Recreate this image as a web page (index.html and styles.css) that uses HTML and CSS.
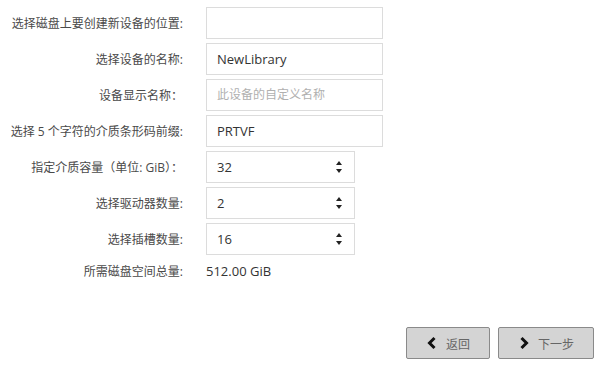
FILE: index.html
```html
<!doctype html>
<html lang="zh">
<head>
  <meta charset="UTF-8">
  <title>新建设备</title>
  <link rel="stylesheet" href="styles.css">
</head>
<body>
<div class="form">
  <div class="row">
    <label>选择磁盘上要创建新设备的位置:</label>
    <div class="field"></div>
  </div>
  <div class="row">
    <label>选择设备的名称:</label>
    <div class="field">NewLibrary</div>
  </div>
  <div class="row">
    <label>设备显示名称：</label>
    <div class="field placeholder">此设备的自定义名称</div>
  </div>
  <div class="row">
    <label>选择 5 个字符的介质条形码前缀:</label>
    <div class="field">PRTVF</div>
  </div>
  <div class="row">
    <label>指定介质容量（单位: GiB）：</label>
    <div class="field num"><span>32</span><i class="spin"><b class="up"></b><b class="down"></b></i></div>
  </div>
  <div class="row">
    <label>选择驱动器数量:</label>
    <div class="field num"><span>2</span><i class="spin"><b class="up"></b><b class="down"></b></i></div>
  </div>
  <div class="row">
    <label>选择插槽数量:</label>
    <div class="field num"><span>16</span><i class="spin"><b class="up"></b><b class="down"></b></i></div>
  </div>
  <div class="row total">
    <label>所需磁盘空间总量:</label>
    <div class="value">512.00 GiB</div>
  </div>
</div>
<div class="actions">
  <button class="btn">
    <svg width="12" height="14" viewBox="0 0 12 14"><path d="M8.5 2 L3.5 7 L8.5 12" fill="none" stroke="#111" stroke-width="3"/></svg>
    返回
  </button>
  <button class="btn">
    <svg width="12" height="14" viewBox="0 0 12 14"><path d="M3.5 2 L8.5 7 L3.5 12" fill="none" stroke="#111" stroke-width="3"/></svg>
    下一步
  </button>
</div>
</body>
</html>
```

FILE: styles.css
```css
* {
  margin: 0;
  padding: 0;
  box-sizing: border-box;
}

body {
  width: 604px;
  height: 370px;
  background: #fff;
  font-family: "Open Sans", "Noto Sans CJK SC", sans-serif;
  color: #333;
  overflow: hidden;
}

.form {
  padding: 7px 0 0 8px;
  display: flex;
  flex-direction: column;
  gap: 4px;
}

.row {
  display: grid;
  grid-template-columns: 175px 1fr;
  column-gap: 23px;
  align-items: center;
  height: 32px;
}

.row label {
  text-align: right;
  font-size: 12px;
  color: #4a4a4a;
  white-space: nowrap;
}

.field {
  width: 177px;
  height: 32px;
  border: 1px solid #dcdcdc;
  padding: 0 10px;
  font-size: 13px;
  line-height: 30px;
  color: #333;
}

.field.placeholder {
  color: #b0b0b0;
  font-size: 12px;
}

.field.num {
  width: 149px;
  display: flex;
  justify-content: space-between;
  align-items: center;
}

.spin {
  display: flex;
  flex-direction: column;
  gap: 4px;
  margin-right: 2px;
}

.spin b {
  width: 0;
  height: 0;
  border-left: 3px solid transparent;
  border-right: 3px solid transparent;
}

.spin .up {
  border-bottom: 4px solid #222;
}

.spin .down {
  border-top: 4px solid #222;
}

.row.total {
  height: 24px;
}

.value {
  font-size: 13px;
  color: #333;
}

.actions {
  display: flex;
  justify-content: flex-end;
  gap: 8px;
  padding: 44px 10px 0 0;
}

.btn {
  width: 84px;
  height: 32px;
  background: #d4d4d4;
  border: 1px solid #8a8a8a;
  border-radius: 2px;
  font-family: "Noto Sans CJK SC", sans-serif;
  font-size: 12px;
  color: #666;
  display: flex;
  align-items: center;
  justify-content: center;
  gap: 8px;
}

.btn + .btn {
  width: 96px;
}
```
